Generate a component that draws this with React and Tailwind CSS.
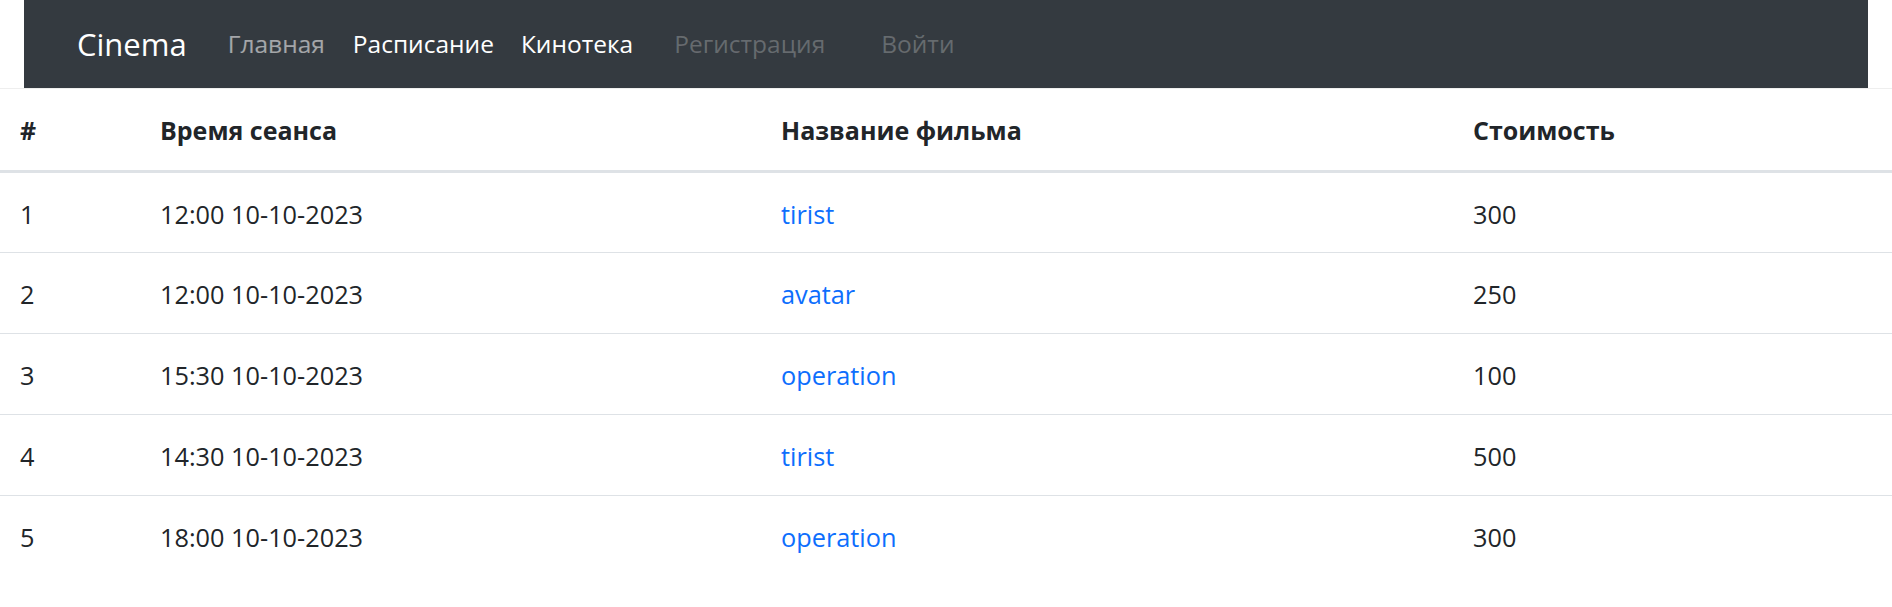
import React from "react";

const sessions = [
  { id: 1, time: "12:00 10-10-2023", film: "tirist", price: 300 },
  { id: 2, time: "12:00 10-10-2023", film: "avatar", price: 250 },
  { id: 3, time: "15:30 10-10-2023", film: "operation", price: 100 },
  { id: 4, time: "14:30 10-10-2023", film: "tirist", price: 500 },
  { id: 5, time: "18:00 10-10-2023", film: "operation", price: 300 },
];

const Navbar = () => {
  return (
    <div className="px-[24px]">
      <nav className="flex items-center h-[88px] bg-[#343a40] pl-[53px] text-[24.5px]">
        <a href="#" className="text-[31px] text-white mr-[41px]">
          Cinema
        </a>
        <a href="#" className="text-white/55 mr-[28px]">
          Главная
        </a>
        <a href="#" className="text-white mr-[27px]">
          Расписание
        </a>
        <a href="#" className="text-white mr-[41px]">
          Кинотека
        </a>
        <a href="#" className="text-white/25 mr-[56px]">
          Регистрация
        </a>
        <a href="#" className="text-white/25">
          Войти
        </a>
      </nav>
    </div>
  );
};

const App = () => {
  return (
    <div
      className="min-h-screen bg-white text-[#212529]"
      style={{ fontFamily: '"Open Sans", "Noto Sans", sans-serif' }}
    >
      <Navbar />
      <table className="w-full table-fixed border-collapse border-t border-[#eeeeee] text-[25.3px]">
        <thead>
          <tr className="border-b-[3px] border-[#dee2e6] text-[25px]">
            <th className="w-[140px] h-[83px] pl-[20px] pt-[2px] text-left font-bold">#</th>
            <th className="w-[621px] pl-[20px] pt-[2px] text-left font-bold">Время сеанса</th>
            <th className="w-[692px] pl-[20px] pt-[2px] text-left font-bold">Название фильма</th>
            <th className="pl-[20px] pt-[2px] text-left font-bold">Стоимость</th>
          </tr>
        </thead>
        <tbody>
          {sessions.map((s, i) => (
            <tr
              key={s.id}
              className={i < sessions.length - 1 ? "border-b border-[#dee2e6]" : ""}
            >
              <td className="h-[81px] pl-[20px] pt-[4px]">{s.id}</td>
              <td className="pl-[20px] pt-[4px]">{s.time}</td>
              <td className="pl-[20px] pt-[4px]">
                <a href="#" className="text-[#0d6efd]">
                  {s.film}
                </a>
              </td>
              <td className="pl-[20px] pt-[4px]">{s.price}</td>
            </tr>
          ))}
        </tbody>
      </table>
    </div>
  );
};

export default App;
